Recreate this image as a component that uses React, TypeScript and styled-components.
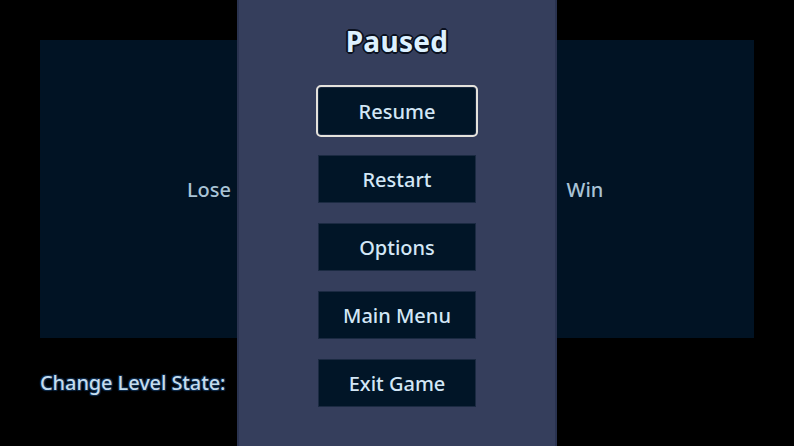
import styled, { createGlobalStyle } from "styled-components";

const GlobalStyle = createGlobalStyle`
    html, body {
        margin: 0;
        padding: 0;
        background: #000000;
    }
    #root {
        width: 794px;
        height: 446px;
    }
`;

const menuItems = ["Resume", "Restart", "Options", "Main Menu", "Exit Game"];

const App = () => {
    return (
        <>
            <GlobalStyle />
            <Screen>
                <Level>
                    <Stage>
                        <StageLabel>Lose</StageLabel>
                        <StageLabel>Win</StageLabel>
                    </Stage>
                    <StateLabel>Change Level State:</StateLabel>
                </Level>
                <PausePanel>
                    <Title>Paused</Title>
                    <Menu>
                        {menuItems.map((item, i) => (
                            <MenuButton key={item} focused={i === 0}>
                                {item}
                            </MenuButton>
                        ))}
                    </Menu>
                </PausePanel>
            </Screen>
        </>
    );
};

export default App;

const Screen = styled.div`
    position: relative;
    width: 794px;
    height: 446px;
    overflow: hidden;
    background: #000000;
    font-family: "Noto Sans", "Open Sans", sans-serif;
`;

const Level = styled.div`
    display: flex;
    flex-direction: column;
    padding: 40px 40px 0 40px;
`;

const Stage = styled.div`
    display: flex;
    justify-content: center;
    align-items: center;
    gap: 276px;
    height: 298px;
    padding-top: 2px;
    box-sizing: border-box;
    background: #011324;
`;

const StageLabel = styled.div`
    width: 100px;
    text-align: center;
    color: #a9c3d6;
    font-size: 20px;
    font-weight: 500;
    line-height: 28px;
`;

const StateLabel = styled.div`
    margin-top: 31px;
    color: #c4dcee;
    font-size: 20px;
    font-weight: 500;
    line-height: 28px;
    letter-spacing: -0.1px;
    text-shadow:
        0 0 2px #0e2a48,
        1px 1px 1px #0e2a48,
        -1px -1px 1px #0e2a48,
        1px -1px 1px #0e2a48,
        -1px 1px 1px #0e2a48;
`;

/* overlay over the level view */
const PausePanel = styled.div`
    position: absolute;
    top: 0;
    left: 237px;
    width: 316px;
    height: 446px;
    display: flex;
    flex-direction: column;
    align-items: center;
    padding-top: 22px;
    box-sizing: content-box;
    background: #353e5c;
    border-left: 2px solid #2a3350;
    border-right: 2px solid #2a3350;
`;

const Title = styled.div`
    height: 38px;
    line-height: 38px;
    color: #ddf1ff;
    font-size: 28px;
    font-weight: 700;
    letter-spacing: 0.3px;
    text-shadow:
        2px 0 0 #0b1120,
        -2px 0 0 #0b1120,
        0 2px 0 #0b1120,
        0 -2px 0 #0b1120,
        1px 1px 0 #0b1120,
        -1px -1px 0 #0b1120,
        1px -1px 0 #0b1120,
        -1px 1px 0 #0b1120;
    margin-bottom: 27px;
`;

const Menu = styled.div`
    display: flex;
    flex-direction: column;
    gap: 20px;
`;

const MenuButton = styled.div<{ focused: boolean }>`
    box-sizing: border-box;
    width: 158px;
    height: 48px;
    padding-top: 2px;
    display: flex;
    justify-content: center;
    align-items: center;
    background: #011527;
    border: 1px solid #1b2a42;
    border-radius: ${({ focused }) => (focused ? "3px" : "0")};
    outline: ${({ focused }) => (focused ? "2px solid #e4e2dc" : "none")};
    color: #d3e7f6;
    font-size: 20px;
    font-weight: 500;
    line-height: 28px;
`;
